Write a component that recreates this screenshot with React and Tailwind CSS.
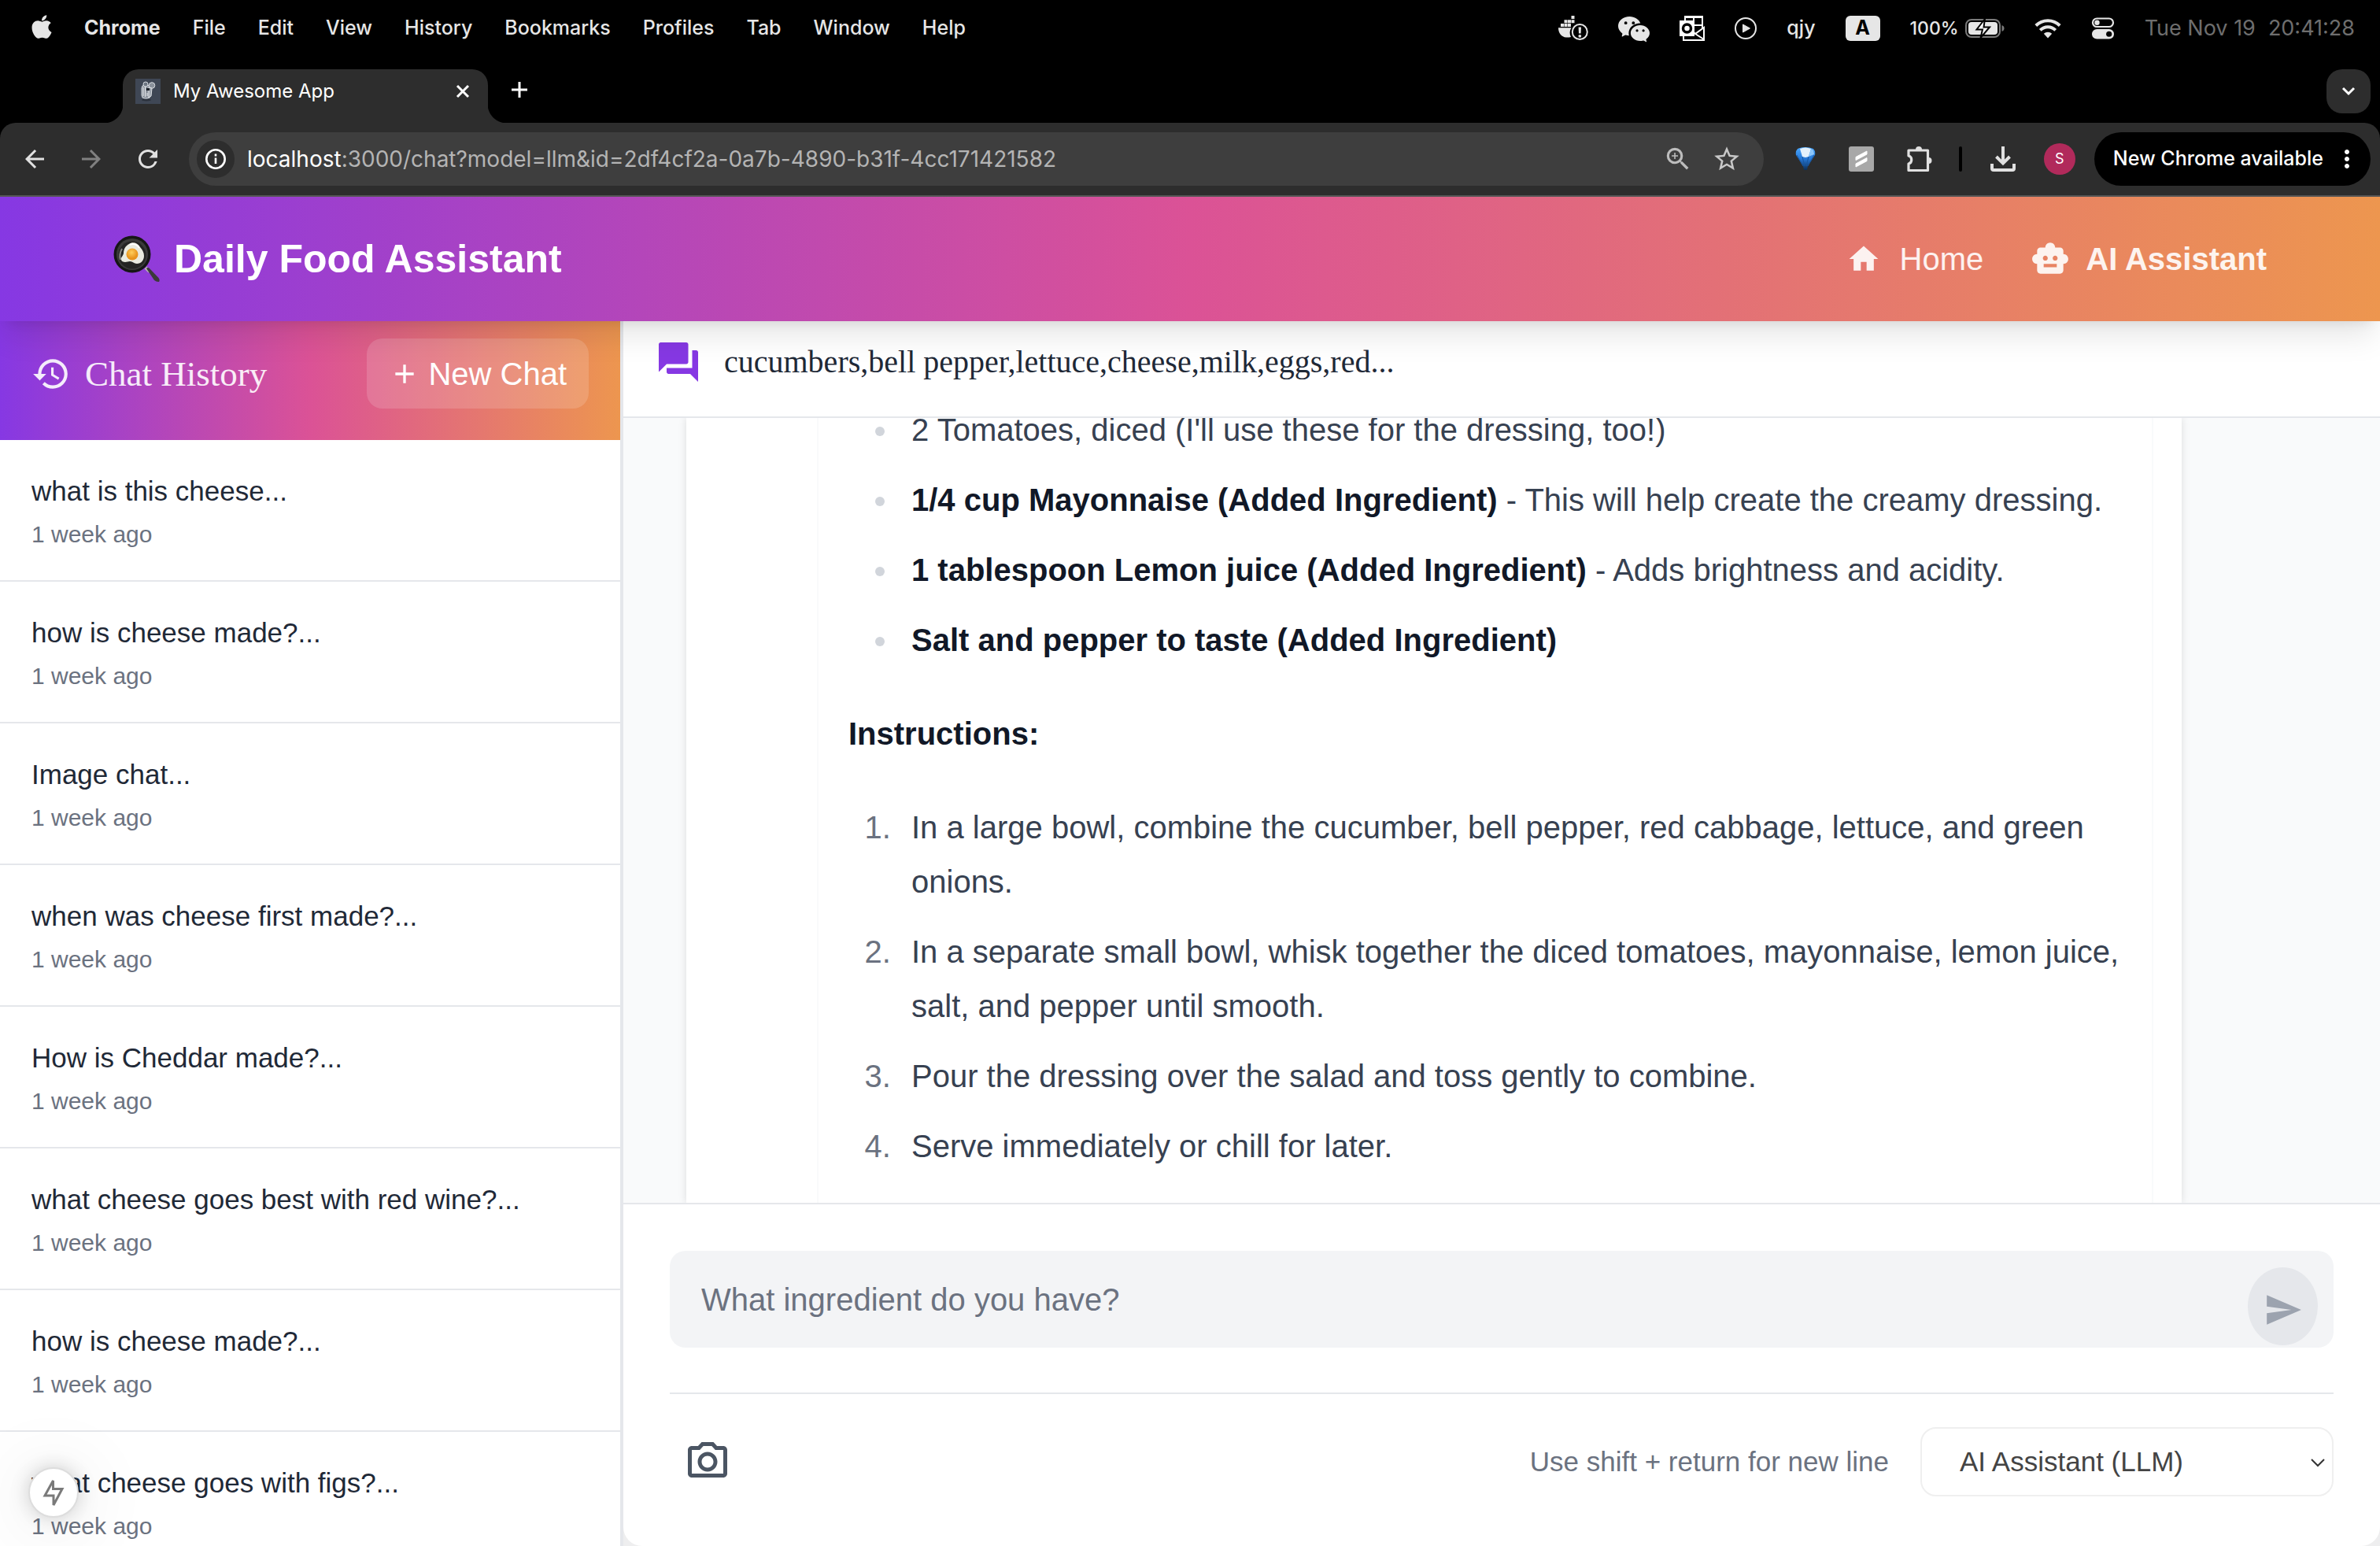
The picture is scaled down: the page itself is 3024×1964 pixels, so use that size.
import React from "react";
import { FaApple } from "react-icons/fa";
import { BsWechat } from "react-icons/bs";
import {
  MdHistory, MdAdd, MdForum, MdHome, MdSmartToy, MdSend, MdOutlineCameraAlt,
  MdArrowBack, MdArrowForward, MdRefresh, MdStarBorder, MdMoreVert, MdZoomIn,
} from "react-icons/md";

const menus = ["File", "Edit", "View", "History", "Bookmarks", "Profiles", "Tab", "Window", "Help"];

const chats = [
  "what is this cheese...",
  "how is cheese made?...",
  "Image chat...",
  "when was cheese first made?...",
  "How is Cheddar made?...",
  "what cheese goes best with red wine?...",
  "how is cheese made?...",
  "what cheese goes with figs?...",
];

function DockerIcon() {
  return (
    <svg viewBox="0 0 38 32" className="h-8 w-[38px]" fill="#e6e6e6">
      <path d="M16.5 0h4v4h-4zM7.500 5.200h4v4h-4zM12 5.200h4v4h-4zM16.500 5.200h4v4h-4zM3 10h4v4H3zM7.500 10h4v4h-4zM12 10h4v4h-4z" />
      <path d="M0 15.200h16.500a12 12 0 0 0-.5 11.800c-2 .6-4 .7-6 .5C4 27 0 22 0 15.200z" />
      <circle cx="27.300" cy="20.500" r="9.500" fill="none" stroke="#e6e6e6" strokeWidth="2" />
      <path d="M25.600 14.500h3.400l-.4 8h-2.600z" />
      <circle cx="27.300" cy="25.800" r="1.900" />
    </svg>
  );
}

function OutlookIcon() {
  return (
    <svg viewBox="0 0 32 32" className="size-8" fill="none" stroke="#fff" strokeWidth="2">
      <path d="M7 7V1h22v15M18 1v12M18 12h11M5 25v6h26V15l-11 8 11 7M17 20l3 3" />
      <path d="M6 0h23v3H6z" fill="#fff" stroke="none" />
      <rect x="0" y="6" width="19" height="20" fill="#fff" stroke="none" />
      <circle cx="9.500" cy="16" r="5" stroke="#000" strokeWidth="3.500" />
    </svg>
  );
}

function PlayIcon() {
  return (
    <svg viewBox="0 0 28 28" className="size-7">
      <circle cx="14" cy="14" r="13" fill="none" stroke="#e6e6e6" strokeWidth="2" />
      <path d="M10.500 9v10l9-5z" fill="#e6e6e6" stroke="#e6e6e6" strokeLinejoin="round" />
    </svg>
  );
}

function BatteryIcon() {
  return (
    <svg viewBox="0 0 50 26" className="h-[26px] w-[50px]">
      <rect x="1" y="2" width="43" height="22" rx="7" fill="none" stroke="#7a7a7a" strokeWidth="2" />
      <rect x="4" y="5" width="37" height="16" rx="4" fill="#e6e6e6" />
      <path d="M46.500 9v8c2-.7 3-2 3-4s-1-3.300-3-4z" fill="#7a7a7a" />
      <path d="M25 1L14.500 14.500H22L19.500 25 31 11.500h-7.500z" fill="#fff" stroke="#000" strokeWidth="2" />
    </svg>
  );
}

function WifiIcon() {
  return (
    <svg viewBox="0 0 34 26" className="h-[26px] w-[34px]" fill="none" stroke="#e6e6e6" strokeWidth="4">
      <path d="M1.800 9.500a21.500 21.500 0 0 1 30.400 0M7.300 15.300a13.500 13.500 0 0 1 19.400 0" />
      <path d="M17 25.500l-5.200-5.700a7.500 7.500 0 0 1 10.400 0z" fill="#e6e6e6" stroke="none" />
    </svg>
  );
}

function ControlsIcon() {
  return (
    <svg viewBox="0 0 30 28" className="h-7 w-[30px]">
      <rect x="2" y="1.500" width="26" height="10.500" rx="5.250" fill="none" stroke="#e6e6e6" strokeWidth="2.200" />
      <circle cx="7.500" cy="6.750" r="3.200" fill="#e6e6e6" />
      <rect x="1" y="15" width="28" height="12.500" rx="6.250" fill="#e6e6e6" />
      <circle cx="22.700" cy="21.250" r="3.600" fill="#000" />
    </svg>
  );
}

function Favicon() {
  return (
    <svg viewBox="0 0 32 32" className="size-8">
      <rect width="32" height="32" fill="#3f4755" />
      <ellipse cx="14" cy="27" rx="6" ry="1.500" fill="#2c323d" />
      <rect x="8" y="8" width="11" height="17" rx="4" fill="#8d949e" stroke="#cfd4da" />
      <circle cx="13" cy="7" r="3" fill="#6d7682" stroke="#d6dadf" />
      <circle cx="21" cy="8.500" r="3.800" fill="#8a919b" stroke="#d6dadf" />
      <path d="M17 11l4 1-1 10-3 2z" fill="#9aa1ab" stroke="#e1e4e8" />
      <path d="M10 11v11M12.500 10v13M15 18v4" stroke="#e9ebee" />
      <rect x="14" y="12" width="4" height="3" fill="#1c2129" />
    </svg>
  );
}

function GemIcon() {
  return (
    <svg viewBox="0 0 26 32" className="h-8 w-[26px]">
      <defs>
        <linearGradient id="gem" x1="0" y1="0" x2="0" y2="1">
          <stop offset="0" stopColor="#4aa8ff" />
          <stop offset="0.5" stopColor="#2779d8" />
          <stop offset="1" stopColor="#0b2e55" />
        </linearGradient>
      </defs>
      <path d="M3 3Q13-1 23 3q3 3 2 8l-9 14-1 5h-4l-1-5L1 11q-1-5 2-8z" fill="url(#gem)" />
      <path d="M6 3q7-3 14 0l-3 10-4 1-4-1z" fill="#e4f1fc" />
      <path d="M17 13l3-10 3 2 1 5z" fill="#8cc6fa" />
      <path d="M2 11l8 14M24 11l-8 14M9 13l3 12M17 13l-3 12" stroke="#17569f" />
    </svg>
  );
}

function SlashIcon() {
  return (
    <svg viewBox="0 0 32 32" className="size-8">
      <rect width="32" height="32" rx="3" fill="#a8a8a8" />
      <path d="M9 13.500L23 6v4L9 17.500z" fill="#fff" stroke="#fff" strokeLinejoin="round" />
      <path d="M9 22L23 14.500v4L9 26z" fill="#fff" stroke="#fff" strokeLinejoin="round" />
    </svg>
  );
}

function PuzzleIcon() {
  return (
    <svg viewBox="0 0 32 34" className="h-[34px] w-8">
      <path d="M2 6h24.500v25.500H2V23c5-1 5-9 0-10z" fill="none" stroke="#e1e1e1" strokeWidth="3.200" strokeLinejoin="round" />
      <path d="M11 5a4 4 0 0 1 8 0zM27.500 15a4 4 0 0 1 0 8z" fill="#e1e1e1" />
    </svg>
  );
}

function DownloadIcon() {
  return (
    <svg viewBox="0 0 32 32" className="size-8" fill="none" stroke="#e1e1e1" strokeWidth="4">
      <path d="M16 0v21M7.500 13l8.500 8.500 8.500-8.500" />
      <path d="M2 22v6q0 2 2 2h24q2 0 2-2v-6" />
    </svg>
  );
}

function InfoIcon() {
  return (
    <svg viewBox="0 0 26 26" className="size-[26px]" fill="none" stroke="#fff" strokeWidth="2.600">
      <circle cx="13" cy="13" r="11.700" />
      <path d="M13 11.500V19M13 6.500v3" />
    </svg>
  );
}

function PanIcon() {
  return (
    <svg viewBox="0 0 60 60" className="size-[60px]">
      <defs>
        <radialGradient id="yolk" cx="0.450" cy="0.350">
          <stop offset="0" stopColor="#ffce5c" />
          <stop offset="1" stopColor="#e8931c" />
        </radialGradient>
      </defs>
      <path d="M41 41l5 5" stroke="#b9b4b4" strokeWidth="4" />
      <path d="M42 42q2-2 4 0L57.500 54q2 3 .500 5-3 .500-6-2z" fill="#3c3a3a" />
      <circle cx="24" cy="24" r="23.500" fill="#161616" />
      <circle cx="24" cy="24" r="20" fill="#3a3a39" />
      <circle cx="24" cy="25" r="17.500" fill="#242423" />
      <path d="M11 17q-4 7-2 14" stroke="#8b8986" strokeWidth="2" fill="none" />
      <path d="M20 11c4-3 11-2 14 4 3 3 5 7 5 11 0 6-4 10-9 10-4 0-5-3-9-3-4 1-10 2-11-2-1-3 2-4 3-8 0-6 3-10 7-12z" fill="#e9eadf" />
      <path d="M21 12c4-2 9-1 12 4" stroke="#fff" strokeWidth="2" fill="none" />
      <circle cx="24" cy="24" r="7.500" fill="url(#yolk)" />
    </svg>
  );
}

function MenuBar() {
  return (
    <div className="flex h-[76px] items-center justify-between bg-black pb-1 pl-10 pr-8 text-[25px] text-[#e6e6e6]">
      <nav className="flex items-center gap-[41px]" aria-label="Menu bar">
        <FaApple className="-mt-1 h-[34px] w-[26px]" />
        <span className="font-bold">Chrome</span>
        {menus.map((m) => (
          <span key={m} className="font-medium">{m}</span>
        ))}
      </nav>
      <div className="flex items-center gap-[38px]">
        <DockerIcon />
        <BsWechat className="size-10" />
        <OutlookIcon />
        <PlayIcon />
        <span className="font-medium">qjy</span>
        <span className="flex h-8 w-11 items-center justify-center rounded-md bg-[#e6e6e6] font-bold text-black">A</span>
        <span className="flex items-center gap-2">
          <span className="text-[23px] font-medium">100%</span>
          <BatteryIcon />
        </span>
        <WifiIcon />
        <ControlsIcon />
        <span className="flex gap-4 text-[27px] text-[#6e6e6e]">
          <span>Tue Nov 19</span>
          <span>20:41:28</span>
        </span>
      </div>
    </div>
  );
}

function TabStrip() {
  return (
    <div className="flex h-20 items-end bg-black pl-[132px] pr-3">
      <div className="size-6 bg-[radial-gradient(circle_at_top_left,transparent_24px,#2d2d2d_25px)]" />
      <div className="flex h-[68px] w-[464px] items-center rounded-t-[20px] bg-[#2d2d2d] pb-3 pl-4 pr-5">
        <Favicon />
        <span className="ml-4 text-2xl text-white">My Awesome App</span>
        <button aria-label="Close tab" className="ml-auto">
          <svg viewBox="0 0 24 24" className="size-6" stroke="#fff" strokeWidth="3"><path d="M5 5l14 14M19 5L5 19" /></svg>
        </button>
      </div>
      <div className="size-6 bg-[radial-gradient(circle_at_top_right,transparent_24px,#2d2d2d_25px)]" />
      <button aria-label="New tab" className="mb-[30px] ml-1">
        <svg viewBox="0 0 24 24" className="size-6" stroke="#fff" strokeWidth="3"><path d="M12 2v20M2 12h20" /></svg>
      </button>
      <button aria-label="Search tabs" className="mb-3 ml-auto flex size-14 items-center justify-center rounded-[20px] bg-[#2d2d2d]">
        <svg viewBox="0 0 24 24" className="size-6" stroke="#fff" strokeWidth="3" fill="none"><path d="M5 8l7 7 7-7" /></svg>
      </button>
    </div>
  );
}

function Toolbar() {
  return (
    <div className="bg-black">
      <div className="flex h-[94px] items-center rounded-t-[20px] border-b-2 border-[#565656] bg-[#2d2d2d] pl-[26px] pr-3 text-[#e1e1e1]">
        <div className="flex items-center gap-9">
          <button aria-label="Back"><MdArrowBack className="size-9" /></button>
          <button aria-label="Forward" className="text-[#808080]"><MdArrowForward className="size-9" /></button>
          <button aria-label="Reload"><MdRefresh className="size-9" /></button>
        </div>
        <div className="ml-[34px] flex h-[68px] flex-1 items-center rounded-full bg-[#3e3e3e] pl-[10px] pr-7">
          <span className="flex size-12 items-center justify-center rounded-full bg-[#2d2d2d]"><InfoIcon /></span>
          <span className="ml-4 text-[28px] text-[#b4b4b4]">
            <span className="text-white">localhost</span>:3000/chat?model=llm&amp;id=2df4cf2a-0a7b-4890-b31f-4cc171421582
          </span>
          <MdZoomIn className="ml-auto size-[38px] text-[#bdbdbd]" />
          <MdStarBorder className="ml-6 size-[38px] text-[#c8c8c8]" />
        </div>
        <div className="ml-10 flex items-center gap-[42px]">
          <GemIcon />
          <SlashIcon />
          <PuzzleIcon />
        </div>
        <div className="ml-[34px] h-8 w-1 rounded-full bg-black" />
        <div className="ml-9 flex items-center gap-9">
          <DownloadIcon />
          <span className="flex size-10 items-center justify-center rounded-full bg-[#b12a5b] text-lg text-white">S</span>
        </div>
        <button className="ml-6 flex h-[68px] items-center rounded-full bg-black pl-6 pr-3 text-[25px] font-medium text-white">
          New Chrome available
          <MdMoreVert className="ml-3 size-9" />
        </button>
      </div>
    </div>
  );
}

function SiteHeader() {
  return (
    <header className="relative z-10 flex h-[158px] shrink-0 items-center justify-between bg-linear-to-r/srgb from-[#8638e3] via-[#db5296] to-[#ed964f] pl-36 pr-36 text-white shadow-[0_25px_37px_-7px_rgba(0,0,0,0.1),0_10px_15px_-10px_rgba(0,0,0,0.1)]">
      <a href="#" className="flex items-center gap-[17px] text-[50px] leading-[60px] font-bold">
        <PanIcon />
        Daily Food Assistant
      </a>
      <nav className="flex items-center gap-[60px] text-[40px] leading-[60px] text-white/90">
        <a href="#" className="flex items-center gap-6"><MdHome className="size-11" />Home</a>
        <a href="#" className="flex items-center gap-5 font-bold"><MdSmartToy className="size-[50px]" />AI Assistant</a>
      </nav>
    </header>
  );
}

function Sidebar() {
  return (
    <aside className="flex w-[792px] shrink-0 flex-col overflow-hidden border-r-4 border-[#e5e7eb] bg-white">
      <div className="flex items-center justify-between bg-linear-to-r/srgb from-[#8638e3] via-[#db5296] to-[#ed964f] px-10 pb-10 pt-[22px] text-white">
        <h2 className="flex items-center gap-[18px] font-['Liberation_Serif',serif] text-[45px] leading-[50px] text-white/90">
          <MdHistory className="size-[50px]" />
          Chat History
        </h2>
        <button className="flex h-[89px] items-center gap-[10px] rounded-[20px] bg-white/15 px-7 text-[40px]">
          <MdAdd className="size-10" />
          New Chat
        </button>
      </div>
      <ul>
        {chats.map((c, i) => (
          <li key={i} className="border-b-2 border-[#e5e7eb] px-10 pb-[38px] pt-10">
            <p className="text-[35px] leading-[50px] text-[#1f2937]">{c}</p>
            <p className="mt-[10px] text-[30px] leading-10 text-[#6b7280]">1 week ago</p>
          </li>
        ))}
      </ul>
    </aside>
  );
}

function Answer() {
  return (
    <div className="flex min-h-0 flex-1 overflow-hidden bg-[#f9fafb] pl-20 pr-[252px]">
      <div className="flex flex-1 bg-white pl-[166px] pr-9 shadow-[0_0_10px_rgba(0,0,0,0.12)]">
        <article className="flex flex-1 flex-col justify-end border-x-2 border-[#f9fafb] bg-white px-[38px] pb-[37px] text-[40px] leading-[69px] text-[#374151]">
          <ul className="flex list-disc flex-col gap-5 pl-[65px] marker:text-[#d1d5db] *:pl-[15px]">
            <li>2 Tomatoes, diced (I'll use these for the dressing, too!)</li>
            <li><strong className="text-[#111827]">1/4 cup Mayonnaise (Added Ingredient)</strong> - This will help create the creamy dressing.</li>
            <li><strong className="text-[#111827]">1 tablespoon Lemon juice (Added Ingredient)</strong> - Adds brightness and acidity.</li>
            <li><strong className="text-[#111827]">Salt and pepper to taste (Added Ingredient)</strong></li>
          </ul>
          <p className="my-[50px] font-bold text-[#111827]">Instructions:</p>
          <ol className="flex list-decimal flex-col gap-5 pl-[65px] marker:text-[#6b7280] *:pl-[15px]">
            <li>In a large bowl, combine the cucumber, bell pepper, red cabbage, lettuce, and green onions.</li>
            <li>In a separate small bowl, whisk together the diced tomatoes, mayonnaise, lemon juice, salt, and pepper until smooth.</li>
            <li>Pour the dressing over the salad and toss gently to combine.</li>
            <li>Serve immediately or chill for later.</li>
          </ol>
        </article>
      </div>
    </div>
  );
}

function Composer() {
  return (
    <form className="rounded-b-3xl border-t-2 border-[#e5e7eb] bg-white px-[59px] pb-[63px] pt-[59px]" onSubmit={(e) => e.preventDefault()}>
      <div className="flex h-[123px] items-center rounded-[20px] bg-[#f3f4f6] pl-10 pr-5">
        <input
          aria-label="Message"
          placeholder="What ingredient do you have?"
          className="flex-1 bg-transparent text-[40px] outline-none placeholder:text-[#6b7280]"
        />
        <button aria-label="Send" className="mt-[18px] flex h-[99px] w-[89px] items-center justify-center rounded-[50%] bg-[#e5e7eb] pt-2 text-[#9ca3af]">
          <MdSend className="size-[50px]" />
        </button>
      </div>
      <div className="mt-[57px] flex items-center border-t-2 border-[#e5e7eb] pt-[42px]">
        <button aria-label="Add a photo" className="ml-[18px] text-[#4b5563]"><MdOutlineCameraAlt className="size-[60px]" /></button>
        <span className="ml-auto text-[35px] text-[#6b7280]">Use shift + return for new line</span>
        <div className="relative ml-10">
          <select aria-label="Assistant model" className="h-[88px] w-[525px] appearance-none rounded-[20px] border-2 border-[#efefef] bg-white pl-12 pr-16 text-[35px] text-[#444]">
            <option>AI Assistant (LLM)</option>
          </select>
          <svg viewBox="0 0 20 12" className="pointer-events-none absolute right-[10px] top-[39px] h-3 w-5" fill="none" stroke="#333" strokeWidth="2"><path d="M2 2l8 8 8-8" /></svg>
        </div>
      </div>
    </form>
  );
}

export default function App() {
  return (
    <div className="relative flex h-screen flex-col overflow-hidden bg-[#eeeeef] font-['Liberation_Sans',Arial,sans-serif]">
      <div className="shrink-0 font-[Inter,sans-serif]">
        <MenuBar />
        <TabStrip />
        <Toolbar />
      </div>
      <SiteHeader />
      <div className="flex min-h-0 flex-1">
        <Sidebar />
        <main className="flex min-w-0 flex-1 flex-col">
          <div className="flex items-center gap-7 border-b-2 border-[#e5e7eb] bg-white px-10 pb-[39px] pt-[22px]">
            <MdForum className="size-[60px] text-[#8638e3]" />
            <h1 className="font-['Liberation_Serif',serif] text-[40px] leading-[60px] text-[#1f2937]">cucumbers,bell pepper,lettuce,cheese,milk,eggs,red...</h1>
          </div>
          <Answer />
          <Composer />
        </main>
      </div>
      <button aria-label="Developer tools" className="absolute bottom-9 left-9 flex size-16 items-center justify-center rounded-full border-2 border-[#dddddd] bg-white shadow-[0_0_24px_rgba(0,0,0,0.18),0_8px_100px_rgba(0,0,0,0.14)]">
        <svg viewBox="0 0 28 38" className="h-[38px] w-7" fill="none" stroke="#7a7a7a" strokeWidth="3">
          <path d="M13.500 4L3 23h11v12L25 14.500H13.500z" />
        </svg>
      </button>
    </div>
  );
}
